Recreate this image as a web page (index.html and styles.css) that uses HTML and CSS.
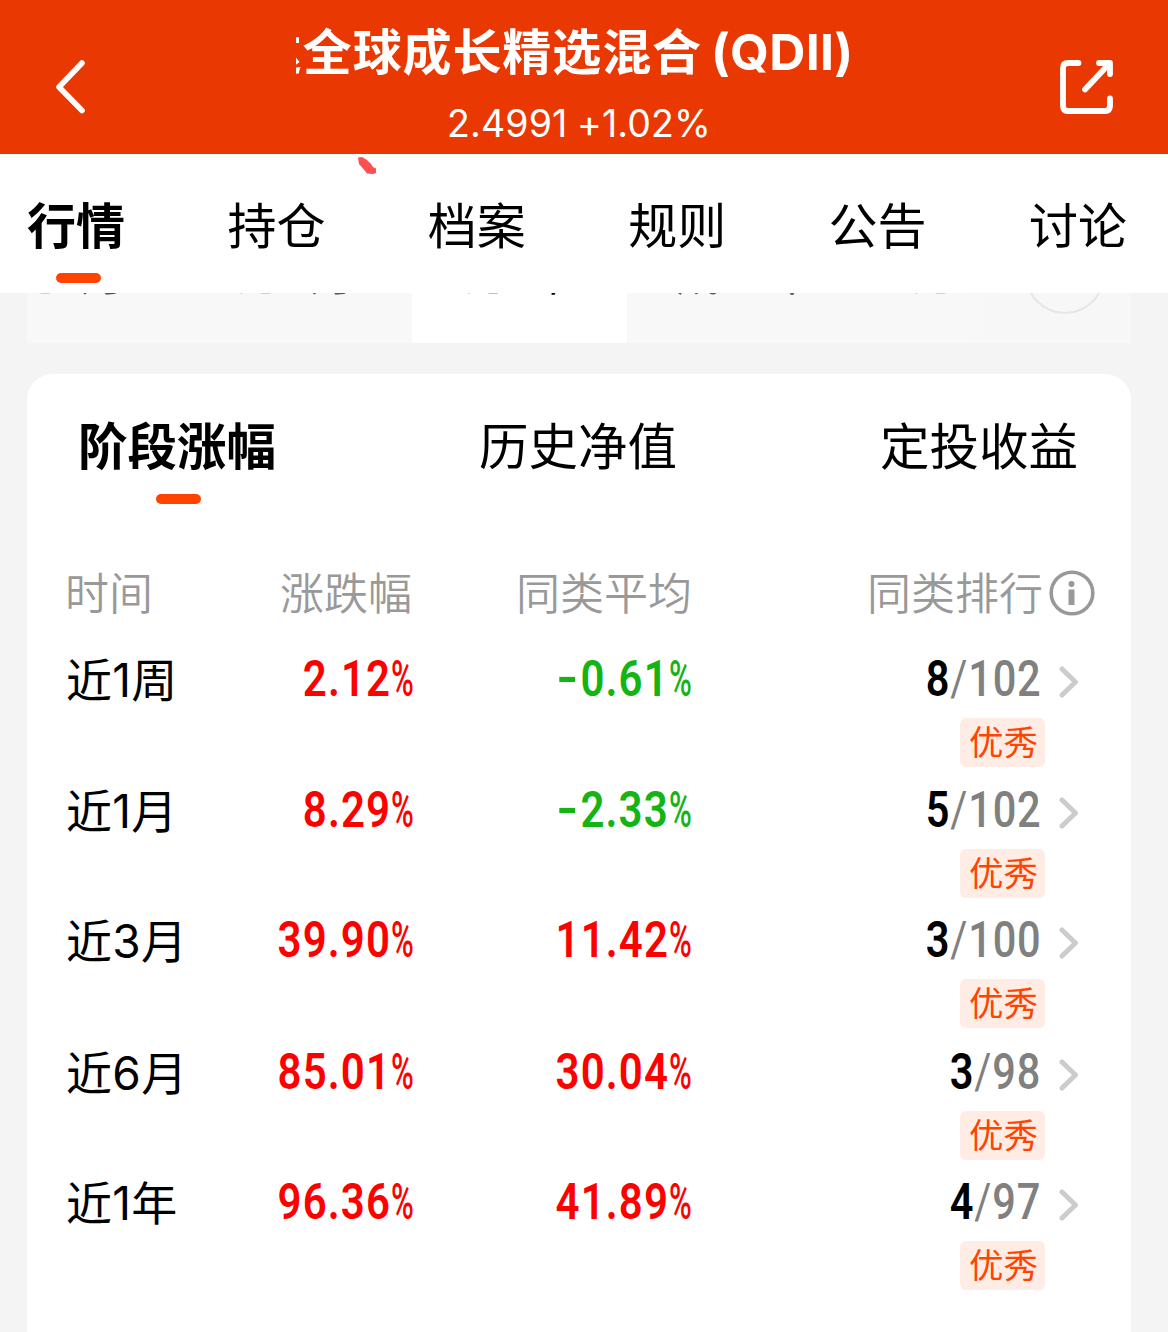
FILE: index.html
```html
<!DOCTYPE html>
<html lang="zh-CN">
<head>
    <meta charset="UTF-8">
    <meta name="viewport" content="width=device-width, initial-scale=1.0">
    <title>基金详情</title>
    <link rel="stylesheet" href="styles.css">
</head>
<body>

    <!-- Top bar -->
    <header class="top-bar">
        <svg class="icon-back" viewBox="0 0 30 54" width="30" height="54">
            <path d="M26 3L3 27L26 50.500" fill="none" stroke="#fff" stroke-width="5.600" stroke-linecap="round" stroke-linejoin="round"/>
        </svg>
        <div class="fund">
            <div class="fund-name"><span class="fund-text">达全球成长精选混合<b class="fund-type">(QDII)</b></span></div>
            <div class="fund-price">2.4991 +1.02%</div>
        </div>
        <svg class="icon-share" viewBox="0 0 54 54" width="54" height="54">
            <path d="M18.500 3H8Q3 3 3 8V46Q3 51 8 51H45Q50 51 50 46V38.500M39 3H50V14M48 5L25 29.500" fill="none" stroke="#fff" stroke-width="5.800" stroke-linecap="round" stroke-linejoin="round"/>
            <path d="M40 3H50V13Z" fill="#fff"/>
        </svg>
    </header>

    <!-- Main tabs -->
    <nav class="tabs">
        <a class="tab active">行情</a>
        <a class="tab">持仓</a>
        <a class="tab">档案</a>
        <a class="tab">规则</a>
        <a class="tab">公告</a>
        <a class="tab">讨论</a>
        <svg class="mark" viewBox="0 0 22 20" width="22" height="20">
            <path d="M2 1.500L6 1L11 4L15 8L17 11L20 12.500V17L17 18L11 17.500L7 12.500L3 8Z" fill="#ff5050"/>
        </svg>
    </nav>

    <!-- Chart range, scrolled under the tabs -->
    <div class="ranges">
        <span class="range">近1月</span>
        <span class="range">近3月</span>
        <span class="range selected">近1年</span>
        <span class="range wide">成立来</span>
        <span class="range">近3年</span>
        <span class="range-fade"></span>
        <span class="range-more"></span>
    </div>

    <!-- Performance card -->
    <main class="card">
        <div class="card-tabs">
            <a class="card-tab active">阶段涨幅</a>
            <a class="card-tab">历史净值</a>
            <a class="card-tab">定投收益</a>
        </div>

        <div class="row head">
            <span>时间</span>
            <span class="right">涨跌幅</span>
            <span class="right average">同类平均</span>
            <span class="rank-head">同类排行
                <svg class="icon-info" viewBox="0 0 46 46" width="46" height="46">
                    <circle cx="23" cy="23" r="20.800" fill="none" stroke="#999" stroke-width="3.600"/>
                    <circle cx="22.500" cy="14" r="3" fill="#999"/>
                    <rect x="19.500" y="19.500" width="6" height="15.500" fill="#999"/>
                </svg>
            </span>
        </div>

        <div class="row">
            <span class="period">近1周</span>
            <span class="num up"><span class="digits">2.12</span><span class="pct">%</span></span>
            <span class="num down"><span class="digits"><span class="sign">-</span>0.61</span><span class="pct">%</span></span>
            <div class="rank">
                <div class="rank-line"><span class="rank-text"><b>8</b><i>/</i>102</span><svg class="arrow" viewBox="0 0 20 32" width="20" height="32"><path d="M3 3L16.500 16L3 29" /></svg></div>
                <span class="badge">优秀</span>
            </div>
        </div>
        <div class="row">
            <span class="period">近1月</span>
            <span class="num up"><span class="digits">8.29</span><span class="pct">%</span></span>
            <span class="num down"><span class="digits"><span class="sign">-</span>2.33</span><span class="pct">%</span></span>
            <div class="rank">
                <div class="rank-line"><span class="rank-text"><b>5</b><i>/</i>102</span><svg class="arrow" viewBox="0 0 20 32" width="20" height="32"><path d="M3 3L16.500 16L3 29" /></svg></div>
                <span class="badge">优秀</span>
            </div>
        </div>
        <div class="row tall">
            <span class="period">近3月</span>
            <span class="num up"><span class="digits">39.90</span><span class="pct">%</span></span>
            <span class="num up"><span class="digits">11.42</span><span class="pct">%</span></span>
            <div class="rank">
                <div class="rank-line"><span class="rank-text"><b>3</b><i>/</i>100</span><svg class="arrow" viewBox="0 0 20 32" width="20" height="32"><path d="M3 3L16.500 16L3 29" /></svg></div>
                <span class="badge">优秀</span>
            </div>
        </div>
        <div class="row">
            <span class="period">近6月</span>
            <span class="num up"><span class="digits">85.01</span><span class="pct">%</span></span>
            <span class="num up"><span class="digits">30.04</span><span class="pct">%</span></span>
            <div class="rank">
                <div class="rank-line"><span class="rank-text"><b>3</b><i>/</i>98</span><svg class="arrow" viewBox="0 0 20 32" width="20" height="32"><path d="M3 3L16.500 16L3 29" /></svg></div>
                <span class="badge">优秀</span>
            </div>
        </div>
        <div class="row">
            <span class="period">近1年</span>
            <span class="num up"><span class="digits">96.36</span><span class="pct">%</span></span>
            <span class="num up"><span class="digits">41.89</span><span class="pct">%</span></span>
            <div class="rank">
                <div class="rank-line"><span class="rank-text"><b>4</b><i>/</i>97</span><svg class="arrow" viewBox="0 0 20 32" width="20" height="32"><path d="M3 3L16.500 16L3 29" /></svg></div>
                <span class="badge">优秀</span>
            </div>
        </div>
    </main>

</body>
</html>
```
FILE: styles.css
```css
* {
    box-sizing: border-box;
    margin: 0;
    padding: 0;
}

body {
    height: 1332px;
    overflow: hidden;
    background-color: #f4f4f4;
    font-family: Inter, "Noto Sans CJK SC", sans-serif;
    color: #000;
}

svg {
    display: block;
    flex: none;
}

/* Top bar */
.top-bar {
    display: flex;
    justify-content: space-between;
    height: 154px;
    padding: 0 54px 0 56px;
    background-color: #ea3802;
    color: #fff;
}

.icon-back,
.icon-share {
    margin-top: 60px;
}

.fund {
    width: 565px;
    margin-left: 10px;
    text-align: center;
}

.fund-name {
    display: flex;
    justify-content: flex-end;
    height: 76px;
    margin-top: 14px;
    padding-right: 7px;
    overflow: hidden;
    font-size: 49px;
    font-weight: 600;
    line-height: 76px;
    letter-spacing: 0.900px;
    white-space: nowrap;
}

.fund-type {
    margin-left: 9px;
    font-size: 50px;
    font-weight: 700;
    letter-spacing: 0.300px;
}

.fund-price {
    padding-left: 2px;
    font-size: 37.500px;
    line-height: 67px;
    letter-spacing: 0.1px;
    word-spacing: -1px;
}

/* Main tabs */
.tabs {
    position: relative;
    display: flex;
    justify-content: space-between;
    height: 139px;
    padding: 37px 41px 0 27px;
    background-color: #fff;
}

.tab {
    font-size: 49px;
    line-height: 72px;
}

.tab.active,
.card-tab.active {
    font-weight: 600;
}

.tab.active::after,
.card-tab.active::after {
    content: "";
    display: block;
    width: 45px;
    height: 10px;
    margin: 10px 0 0 29px;
    border-radius: 5px;
    background-color: #ff4400;
}

.mark {
    position: absolute;
    left: 356px;
    top: 2px;
}

/* Chart range */
.ranges {
    position: relative;
    display: flex;
    gap: 10px;
    height: 50px;
    margin: 0 37px 0 27px;
    overflow: hidden;
    background-color: #f8f8f8;
}

.range {
    flex: none;
    width: 215px;
    height: 89px;
    margin-top: -39px;
    padding-left: 4px;
    font-size: 44px;
    line-height: 42px;
    letter-spacing: 1px;
    text-align: center;
    color: #555;
}

.range:first-child {
    margin-left: -65px;
}

.range.selected {
    padding-left: 0;
    background-color: #fff;
    color: #000;
}

.range.wide {
    letter-spacing: 3px;
}

.range-fade {
    position: absolute;
    left: 945px;
    top: 0;
    width: 159px;
    height: 50px;
    background: linear-gradient(to right, rgba(248, 248, 248, 0), #f7f7f7 25px);
}

.range-more {
    position: absolute;
    left: 998px;
    top: -59px;
    width: 80px;
    height: 80px;
    border: 2px solid #e6e6e6;
    border-radius: 50%;
}

/* Performance card */
.card {
    height: 1000px;
    margin: 31px 37px 0 27px;
    padding: 36px 0 0 39px;
    border-radius: 26px;
    background-color: #fff;
}

.card-tabs {
    display: flex;
    justify-content: space-between;
    height: 146px;
    padding: 0 53px 0 12px;
}

.card-tab {
    font-size: 49.500px;
    line-height: 74px;
}

.card-tab.active::after {
    margin: 10px 0 0 78px;
}

.row {
    display: grid;
    grid-template-columns: 146px 203px 278px 1fr;
    height: 130.600px;
}

.row.tall {
    height: 131.600px;
}

.row.head {
    height: 90px;
    margin-left: -1px;
    font-size: 44px;
    font-weight: 350;
    line-height: 76px;
    color: #999;
}

.right {
    padding-right: 2px;
    text-align: right;
}

.right.average {
    padding-right: 0;
}

.rank-head {
    display: flex;
    justify-content: flex-end;
    align-items: flex-start;
    gap: 6px;
    padding-right: 36px;
}

.icon-info {
    margin-top: 14px;
}

.period {
    font-size: 46px;
    font-weight: 370;
    line-height: 68px;
    letter-spacing: 0.300px;
}

/* Narrow digits with a lighter percent sign */
.num {
    display: flex;
    justify-content: flex-end;
    font-family: Roboto, sans-serif;
    font-size: 50px;
    line-height: 66px;
}

.digits {
    font-weight: 600;
    letter-spacing: 1.300px;
    transform: scaleX(0.84);
    transform-origin: right;
}

.sign {
    display: inline-block;
    margin-right: 5px;
    transform: translateY(-1px) scaleX(1.4);
}

.pct {
    width: 24px;
    font-weight: 500;
    transform: scaleX(0.62);
    transform-origin: left;
}

.up {
    color: #ff0000;
}

.down {
    color: #14b414;
}

.rank {
    padding-right: 52px;
}

.rank-line {
    display: flex;
    justify-content: flex-end;
    gap: 18px;
    height: 69px;
    font-family: Roboto, sans-serif;
    font-size: 50px;
    line-height: 66px;
}

.rank-text {
    font-weight: 500;
    letter-spacing: 1px;
    color: #808080;
    transform: scaleX(0.83);
    transform-origin: right;
}

.rank-text b {
    font-weight: 600;
    color: #000;
}

.rank-text i {
    font-style: normal;
    font-weight: 400;
}

.arrow {
    margin-top: 20px;
}

.arrow path {
    fill: none;
    stroke: #ccc;
    stroke-width: 5;
    stroke-linecap: round;
    stroke-linejoin: round;
}

.badge {
    display: block;
    width: 85px;
    height: 49px;
    margin: 3px 34px 0 auto;
    padding-left: 2px;
    border-radius: 6px;
    background-color: #ffece5;
    font-size: 34.500px;
    line-height: 49px;
    text-align: center;
    color: #ff4400;
}
```
